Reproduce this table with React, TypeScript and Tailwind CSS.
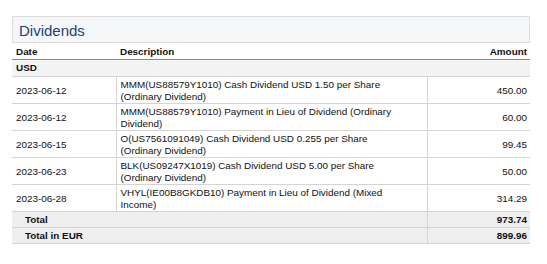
const rows = [
  {
    date: "2023-06-12",
    desc: ["MMM(US88579Y1010) Cash Dividend USD 1.50 per Share", "(Ordinary Dividend)"],
    amount: "450.00",
  },
  {
    date: "2023-06-12",
    desc: ["MMM(US88579Y1010) Payment in Lieu of Dividend (Ordinary", "Dividend)"],
    amount: "60.00",
  },
  {
    date: "2023-06-15",
    desc: ["O(US7561091049) Cash Dividend USD 0.255 per Share", "(Ordinary Dividend)"],
    amount: "99.45",
  },
  {
    date: "2023-06-23",
    desc: ["BLK(US09247X1019) Cash Dividend USD 5.00 per Share", "(Ordinary Dividend)"],
    amount: "50.00",
  },
  {
    date: "2023-06-28",
    desc: ["VHYL(IE00B8GKDB10) Payment in Lieu of Dividend (Mixed", "Income)"],
    amount: "314.29",
  },
];

const totals = [
  { label: "Total", amount: "973.74" },
  { label: "Total in EUR", amount: "899.96" },
];

function App() {
  return (
    <div className="min-h-[264px] bg-white pt-4 pl-3 font-['Liberation_Sans',Arial,sans-serif] text-[9.9px] leading-[11.5px] text-[#111]">
      <div className="w-[518px]">
        <div className="h-[27px] border border-[#dcdcdc] bg-[#f5f6f8] pl-[6px] pt-[5px] text-[15px] leading-[18px] text-[#1f3f7a]">
          Dividends
        </div>
        <table className="w-full border-collapse">
          <thead>
            <tr className="h-[16px] border-b border-[#8a8a8a] font-bold">
              <th className="w-[104px] pl-1 pt-[2px] text-left">Date</th>
              <th className="pl-1 pt-[2px] text-left">Description</th>
              <th className="w-[103px] pr-[3px] pt-[2px] text-right">Amount</th>
            </tr>
          </thead>
          <tbody>
            <tr className="h-[17px] border-b border-[#d4d4d4] bg-[#f4f4f5] font-bold">
              <td colSpan={3} className="pl-1">
                USD
              </td>
            </tr>
            {rows.map((r, i) => (
              <tr key={i} className="h-[27px] border-b border-[#d4d4d4]">
                <td className="pl-1 pt-[3px] align-middle">{r.date}</td>
                <td className="whitespace-nowrap border-x border-[#d4d4d4] pl-1 pt-[2px] align-middle">
                  {r.desc[0]}
                  <br />
                  {r.desc[1]}
                </td>
                <td className="pr-[3px] pt-[3px] text-right align-middle">{r.amount}</td>
              </tr>
            ))}
            {totals.map((t) => (
              <tr key={t.label} className="h-[16px] border-b border-[#d4d4d4] bg-[#eeeeee] font-bold">
                <td colSpan={2} className="pl-[13px] pt-[1px]">
                  {t.label}
                </td>
                <td className="border-l border-[#d4d4d4] pr-[3px] pt-[1px] text-right">{t.amount}</td>
              </tr>
            ))}
          </tbody>
        </table>
      </div>
    </div>
  );
}

export default App;
